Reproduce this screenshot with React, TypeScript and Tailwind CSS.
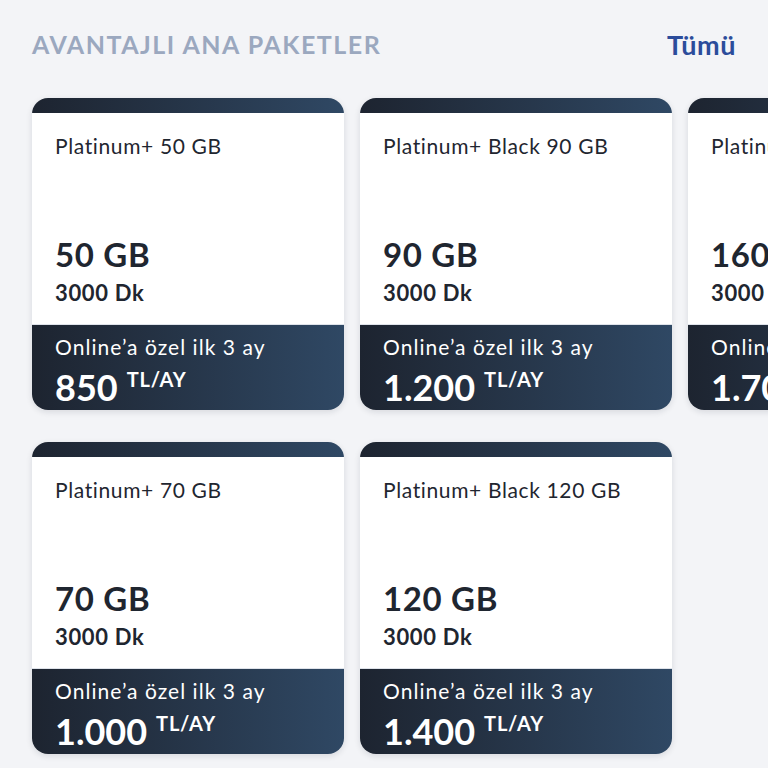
import React from 'react'

type Pkg = { name: string; gb: string; dk: string; price: string }

const ROWS: Pkg[][] = [
  [
    { name: 'Platinum+ 50 GB', gb: '50 GB', dk: '3000 Dk', price: '850' },
    { name: 'Platinum+ Black 90 GB', gb: '90 GB', dk: '3000 Dk', price: '1.200' },
    { name: 'Platinum+ Black 160 GB', gb: '160 GB', dk: '3000 Dk', price: '1.700' },
  ],
  [
    { name: 'Platinum+ 70 GB', gb: '70 GB', dk: '3000 Dk', price: '1.000' },
    { name: 'Platinum+ Black 120 GB', gb: '120 GB', dk: '3000 Dk', price: '1.400' },
  ],
]

function PackageCard({ pkg }: { pkg: Pkg }) {
  return (
    <div className="w-[312px] h-[312px] shrink-0 flex flex-col rounded-2xl shadow-[0_2px_6px_rgba(15,23,42,0.12)] bg-white overflow-hidden">
      <div className="h-[15px] bg-gradient-to-r from-[#1d2430] to-[#2f4864]" />
      <div className="flex-1 flex flex-col px-[23px] pt-[19px] pb-[17px] border-b border-[#dfe3ea] text-[#1f2630]">
        <div className="text-[21px] leading-[28px] tracking-[0.03em] whitespace-nowrap">{pkg.name}</div>
        <div className="mt-auto text-[33px] leading-[36px] font-bold tracking-[0.02em]">{pkg.gb}</div>
        <div className="mt-[7px] text-[22px] leading-[28px] font-bold tracking-[0.03em]">{pkg.dk}</div>
      </div>
      <div className="h-[85px] px-[23px] pt-[8px] bg-gradient-to-r from-[#1d2430] to-[#2f4864] text-white whitespace-nowrap">
        <div className="text-[21px] leading-[28px] tracking-[0.05em]">Online’a özel ilk 3 ay</div>
        <div className="mt-[6px] flex items-start gap-[9px]">
          <span className="text-[36px] leading-[40px] font-bold">{pkg.price}</span>
          <span className="text-[20px] leading-[22px] font-bold tracking-[0.04em] mt-[1px]">TL/AY</span>
        </div>
      </div>
    </div>
  )
}

export default function App() {
  return (
    <div className="min-h-[768px] w-[768px] overflow-hidden bg-[#f3f4f7] pt-[30px] font-['Lato',sans-serif]">
      <div className="flex items-center justify-between px-[32px] h-[30px]">
        <h2 className="text-[25px] font-bold tracking-[0.06em] text-[#9ba8bf]">AVANTAJLI ANA PAKETLER</h2>
        <a className="text-[27px] font-bold tracking-[0.02em] text-[#2b4c9b]">Tümü</a>
      </div>
      <div className="mt-[38px] flex flex-col gap-[32px] pl-[32px]">
        {ROWS.map((row, i) => (
          <div key={i} className="flex gap-[16px]">
            {row.map((p) => (
              <PackageCard key={p.name} pkg={p} />
            ))}
          </div>
        ))}
      </div>
    </div>
  )
}
